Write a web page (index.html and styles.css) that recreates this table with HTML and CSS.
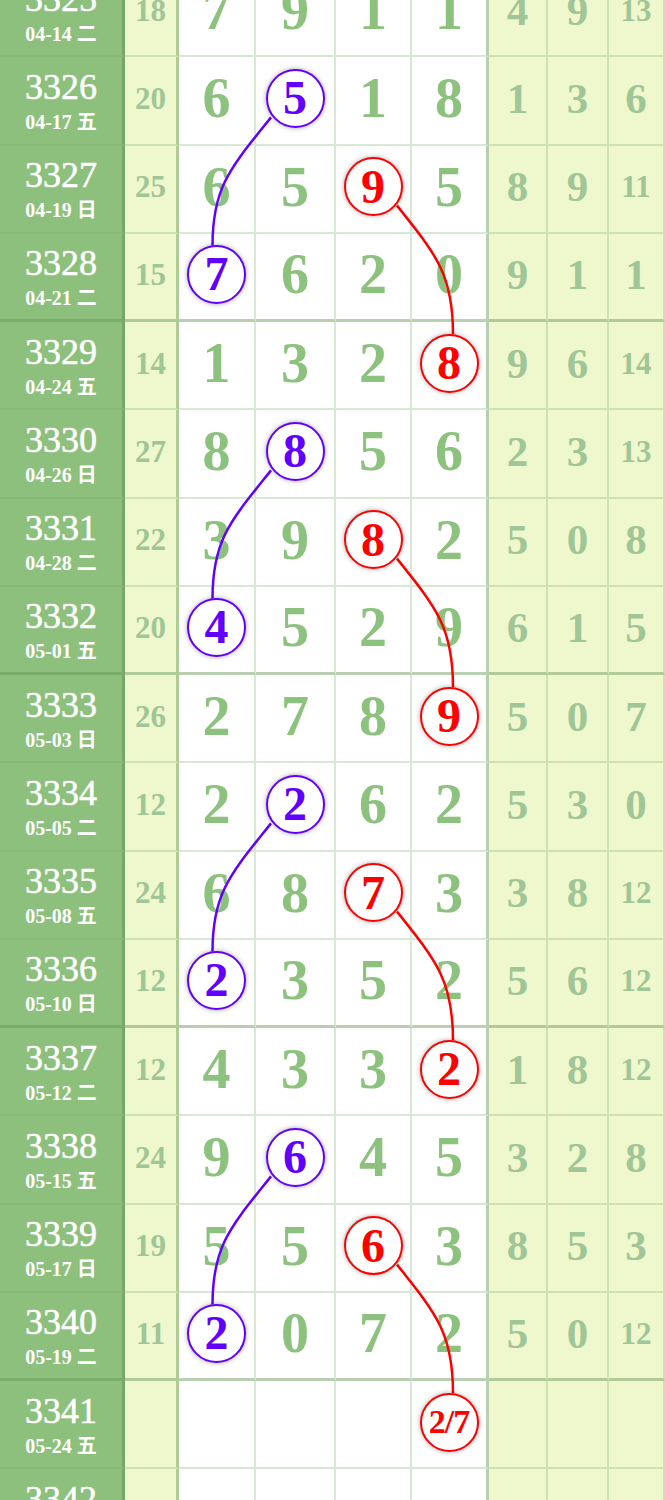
FILE: index.html
```html
<!DOCTYPE html>
<html lang="zh-CN">
<head>
    <meta charset="UTF-8">
    <meta name="viewport" content="width=device-width, initial-scale=1.0">
    <title>走势图</title>
    <link rel="stylesheet" href="styles.css">
</head>
<body>
    <div class="chart" id="chart">
        <svg class="links" id="links"></svg>
    </div>

    <script>
        // b = blue ball, r = red ball
        const data = [
            ['3325', '04-14 二', '18', ['7', '9', '1', '1'], ['4', '9', '13']],
            ['3326', '04-17 五', '20', ['6', 'b5', '1', '8'], ['1', '3', '6']],
            ['3327', '04-19 日', '25', ['6', '5', 'r9', '5'], ['8', '9', '11']],
            ['3328', '04-21 二', '15', ['b7', '6', '2', '0'], ['9', '1', '1']],
            ['3329', '04-24 五', '14', ['1', '3', '2', 'r8'], ['9', '6', '14']],
            ['3330', '04-26 日', '27', ['8', 'b8', '5', '6'], ['2', '3', '13']],
            ['3331', '04-28 二', '22', ['3', '9', 'r8', '2'], ['5', '0', '8']],
            ['3332', '05-01 五', '20', ['b4', '5', '2', '9'], ['6', '1', '5']],
            ['3333', '05-03 日', '26', ['2', '7', '8', 'r9'], ['5', '0', '7']],
            ['3334', '05-05 二', '12', ['2', 'b2', '6', '2'], ['5', '3', '0']],
            ['3335', '05-08 五', '24', ['6', '8', 'r7', '3'], ['3', '8', '12']],
            ['3336', '05-10 日', '12', ['b2', '3', '5', '2'], ['5', '6', '12']],
            ['3337', '05-12 二', '12', ['4', '3', '3', 'r2'], ['1', '8', '12']],
            ['3338', '05-15 五', '24', ['9', 'b6', '4', '5'], ['3', '2', '8']],
            ['3339', '05-17 日', '19', ['5', '5', 'r6', '3'], ['8', '5', '3']],
            ['3340', '05-19 二', '11', ['b2', '0', '7', '2'], ['5', '0', '12']],
            ['3341', '05-24 五', '', ['', '', '', 'r2/7'], ['', '', '']],
            ['3342', '05-26 日', '', ['', '', '', ''], ['', '', '']]
        ];

        const chart = document.getElementById('chart');

        function mainCell(v) {
            if (v[0] === 'b' || v[0] === 'r') {
                const small = v.length > 2 ? ' small' : '';
                const color = v[0] === 'b' ? 'blue' : 'red';
                return `<div class="cell main"><span class="ball ${color}${small}">${v.slice(1)}</span></div>`;
            }
            return `<div class="cell main"><span class="num">${v}</span></div>`;
        }

        function distCell(v) {
            const two = v.length > 1 ? ' two' : '';
            return `<div class="cell dist"><span class="sub${two}">${v}</span></div>`;
        }

        data.forEach((d, i) => {
            const row = document.createElement('div');
            row.className = 'row' + (i % 4 === 3 ? ' group-end' : '');
            row.innerHTML = `
                <div class="cell issue"><span class="no">${d[0]}</span><span class="date">${d[1]}</span></div>
                <div class="cell sum"><span class="sub two">${d[2]}</span></div>
                ${d[3].map(mainCell).join('')}
                ${d[4].map(distCell).join('')}
            `;
            chart.appendChild(row);
        });

        // connect balls of the same colour in pairs with a curve
        function drawLinks() {
            const svg = document.getElementById('links');
            const box = chart.getBoundingClientRect();
            svg.setAttribute('viewBox', `0 0 ${box.width} ${box.height}`);
            let paths = '';
            ['blue', 'red'].forEach(color => {
                const balls = Array.from(chart.querySelectorAll('.ball.' + color));
                for (let i = 0; i + 1 < balls.length; i += 2) {
                    const a = balls[i].getBoundingClientRect();
                    const b = balls[i + 1].getBoundingClientRect();
                    const ax = a.left + a.width / 2 - box.left, ay = a.top + a.height / 2 - box.top;
                    const bx = b.left + b.width / 2 - box.left, by = b.top + b.height / 2 - box.top;
                    const s = bx < ax ? -1 : 1;
                    paths += `<path class="${color}" d="M${ax + 24 * s} ${ay + 19} C${ax + 64 * s} ${ay + 69} ${bx + 4 * s} ${by - 88} ${bx + 4 * s} ${by - 29}"/>`;
                }
            });
            svg.innerHTML = paths;
        }

        drawLinks();
    </script>
</body>
</html>
```

FILE: styles.css
```css
body {
    margin: 0;
    background-color: #ffffff;
    font-family: "Liberation Serif", "Noto Sans CJK SC", serif;
}
.chart {
    position: relative;
    margin-top: -31px;
}
.row {
    display: grid;
    grid-template-columns: 125px 54px 77px 80px 76px 77px 59px 61px 1fr;
    height: 88.25px;
}
.cell {
    box-sizing: border-box;
    display: flex;
    align-items: center;
    justify-content: center;
    padding-bottom: 4px;
    border-right: 2px solid rgba(120, 170, 105, 0.28);
    border-bottom: 2px solid rgba(120, 170, 105, 0.28);
    line-height: 1;
}
.row.group-end .cell {
    border-bottom: 3px solid rgba(100, 150, 85, 0.45);
}
.issue {
    flex-direction: column;
    gap: 7px;
    padding-bottom: 0;
    background-color: #8dc07d;
    color: #ffffff;
    border-right: 3px solid rgba(70, 125, 60, 0.35);
}
.issue .no {
    font-size: 36px;
    -webkit-text-stroke: 0.5px #ffffff;
}
.issue .date {
    font-size: 20px;
    font-weight: bold;
}
.sum {
    background-color: #eff8cc;
    border-right: 3px solid rgba(100, 150, 85, 0.45);
}
.main {
    background-color: #ffffff;
}
.main:nth-child(6) {
    border-right: 3px solid rgba(100, 150, 85, 0.45);
}
.dist {
    background-color: #eff8cc;
}
.num {
    font-size: 56px;
    font-weight: bold;
    color: #8cc27e;
}
.sub {
    font-size: 43px;
    font-weight: bold;
    color: #a0c596;
}
.sub.two {
    font-size: 31px;
}
.ball {
    position: relative;
    z-index: 2;
    box-sizing: border-box;
    width: 59px;
    height: 59px;
    display: flex;
    align-items: center;
    justify-content: center;
    border-radius: 50%;
    border: 2.5px solid currentColor;
    background-color: #ffffff;
    box-shadow: 0 0 5px rgba(0, 0, 0, 0.35);
    font-size: 48px;
    font-weight: bold;
}
.ball.blue {
    color: #6200ff;
}
.ball.red {
    color: #ff0000;
}
.ball.small {
    font-size: 34px;
    letter-spacing: -1px;
}
.links {
    position: absolute;
    top: 0;
    left: 0;
    width: 100%;
    height: 100%;
    z-index: 1;
    pointer-events: none;
    overflow: visible;
}
.links path {
    fill: none;
    stroke-width: 2.5;
}
.links path.blue {
    stroke: #6200ff;
}
.links path.red {
    stroke: #ff0000;
}
```
